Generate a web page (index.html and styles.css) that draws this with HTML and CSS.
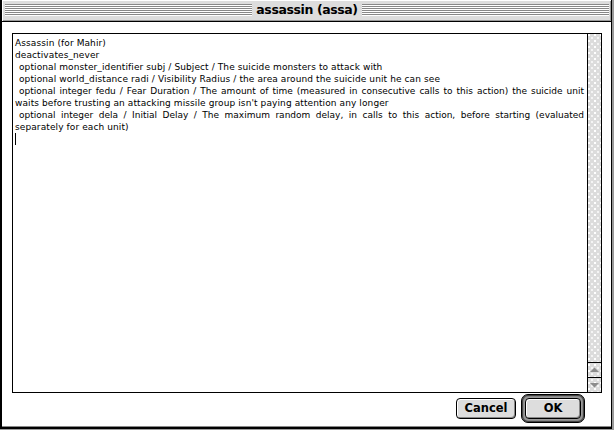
FILE: index.html
```html
<!DOCTYPE html>
<html>
<head>
<meta charset="utf-8">
<link rel="stylesheet" href="styles.css">
</head>
<body>
<div class="window">
  <div class="titlebar">
    <div class="stripes"></div>
    <div class="title">assassin (assa)</div>
    <div class="stripes"></div>
  </div>
  <div class="content">
    <div class="field">
      <div class="text">
        <div class="line">Assassin (for Mahir)</div>
        <div class="line">deactivates_never</div>
        <div class="line ind">optional monster_identifier subj / Subject / The suicide monsters to attack with</div>
        <div class="line ind">optional world_distance radi / Visibility Radius / the area around the suicide unit he can see</div>
        <div class="line ind just">optional integer fedu / Fear Duration / The amount of time (measured in consecutive calls to this action) the suicide unit</div>
        <div class="line">waits before trusting an attacking missile group isn't paying attention any longer</div>
        <div class="line ind just">optional integer dela / Initial Delay / The maximum random delay, in calls to this action, before starting (evaluated</div>
        <div class="line">separately for each unit)</div>
        <div class="line"><span class="caret"></span></div>
      </div>
      <div class="scrollbar">
        <div class="track"></div>
        <div class="arrow">
          <svg width="13" height="14" viewBox="0 0 13 14"><polygon points="2,9 11,9 6.5,4.5" fill="#8c8c8c"/></svg>
        </div>
        <div class="arrow">
          <svg width="13" height="14" viewBox="0 0 13 14"><polygon points="2,5 11,5 6.5,9.5" fill="#8c8c8c"/></svg>
        </div>
      </div>
    </div>
    <div class="buttons">
      <div class="btn cancel">Cancel</div>
      <div class="ring"><div class="btn ok">OK</div></div>
    </div>
  </div>
</div>
</body>
</html>
```
FILE: styles.css
```css
html, body {
  margin: 0;
  padding: 0;
}
body {
  background: #9a9a9a;
  width: 614px;
  height: 430px;
  overflow: hidden;
}
.window {
  width: 612px;
  height: 429px;
  box-sizing: border-box;
  border-left: 2px solid #000;
  border-right: 1px solid #000;
  border-bottom: 2px solid #000;
  background: #fff;
  display: flex;
  flex-direction: column;
}
.titlebar {
  height: 22px;
  box-sizing: border-box;
  background: #dddddd;
  border-bottom: 1px solid #000;
  box-shadow: inset 1px 1px 0 #fff, inset -1px -1px 0 #999;
  display: flex;
  align-items: flex-start;
  padding: 4px 2px 0 3px;
}
.stripes {
  flex: 1;
  height: 12px;
  background: repeating-linear-gradient(to bottom, #888 0 1px, #fff 1px 2px);
}
.title {
  padding: 0 4px;
  margin-top: -2px;
  font-family: "DejaVu Sans", sans-serif;
  font-weight: bold;
  font-size: 12.5px;
  line-height: 15px;
  letter-spacing: -0.4px;
  color: #000;
}
.content {
  flex: 1;
  padding: 11px 0 0 10px;
  border-bottom: 1px solid #888;
  display: flex;
  flex-direction: column;
}
.field {
  width: 590px;
  height: 360px;
  box-sizing: border-box;
  border: 1px solid #000;
  display: flex;
}
.text {
  flex: 1;
  padding: 3px 3px 0 2px;
  font-family: "DejaVu Sans", sans-serif;
  font-size: 9px;
  line-height: 12px;
  color: #000;
  overflow: hidden;
}
.line {
  white-space: nowrap;
  height: 12px;
  letter-spacing: 0.1px;
}
.ind {
  padding-left: 4px;
}
.just {
  white-space: normal;
  text-align: justify;
  text-align-last: justify;
  letter-spacing: 0;
}
.caret {
  display: inline-block;
  width: 1px;
  height: 12px;
  background: #000;
  vertical-align: top;
}
.scrollbar {
  width: 14px;
  box-sizing: border-box;
  border-left: 1px solid #000;
  display: flex;
  flex-direction: column;
  background-color: #dcdcdc;
  background-image:
    radial-gradient(circle at 1px 1px, #fff 0.8px, transparent 1px),
    radial-gradient(circle at 4px 4px, #f4f4f4 0.8px, transparent 1px);
  background-size: 6px 6px, 6px 6px;
}
.track {
  flex: 1;
}
.arrow {
  height: 15px;
  box-sizing: border-box;
  border-top: 1px solid #000;
  display: flex;
  align-items: center;
  justify-content: center;
}
.arrow svg {
  display: block;
}
.buttons {
  height: 29px;
  width: 590px;
  margin-top: 1px;
  display: flex;
  align-items: center;
  justify-content: flex-end;
  gap: 5px;
  padding-right: 17px;
  box-sizing: border-box;
}
.btn {
  height: 21px;
  box-sizing: border-box;
  border: 1px solid #000;
  border-radius: 4px;
  background: #dddddd;
  box-shadow: inset 1px 1px 0 #fff, inset -1px -1px 0 #888;
  font-family: "DejaVu Sans", sans-serif;
  font-weight: bold;
  font-size: 11.5px;
  line-height: 19px;
  text-align: center;
  color: #000;
}
.cancel {
  width: 60px;
}
.ring {
  width: 64px;
  height: 29px;
  box-sizing: border-box;
  border: 1px solid #000;
  border-radius: 7px;
  background: #9a9a9a;
  padding: 3px;
  box-shadow: inset 0 0 0 1px #444, inset 0 0 0 2px #888;
}
.ok {
  width: 56px;
}
```
